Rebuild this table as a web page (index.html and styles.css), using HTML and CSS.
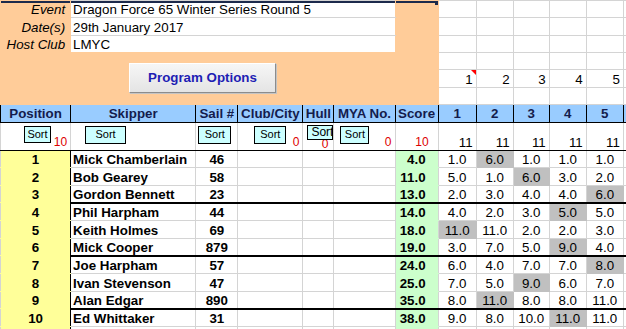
FILE: index.html
```html
<!DOCTYPE html>
<html>
<head>
<meta charset="utf-8">
<title>Dragon Force 65 Winter Series Round 5</title>
<link rel="stylesheet" href="styles.css">
</head>
<body>
<table class="sheet">
  <colgroup>
    <col class="cA"><col class="cB"><col class="cC"><col class="cD"><col class="cE"><col class="cF"><col class="cG">
    <col class="cH"><col class="cI"><col class="cJ"><col class="cK"><col class="cL"><col class="cM">
  </colgroup>
  <tbody>
    <tr class="rt">
      <td class="pe lbl first">Event</td>
      <td class="info first" colspan="5">Dragon Force 65 Winter Series Round 5</td>
      <td class="pe first handle-cell"><span class="handle"></span></td>
      <td></td><td></td><td></td><td></td><td></td><td></td>
    </tr>
    <tr class="rt">
      <td class="pe lbl">Date(s)</td>
      <td class="info" colspan="5">29th January 2017</td>
      <td class="pe"></td>
      <td></td><td></td><td></td><td></td><td></td><td></td>
    </tr>
    <tr class="rt">
      <td class="pe lbl">Host Club</td>
      <td class="info last" colspan="5">LMYC</td>
      <td class="pe"></td>
      <td></td><td></td><td></td><td></td><td></td><td></td>
    </tr>
    <tr class="rt">
      <td class="pe btn-cell" colspan="7" rowspan="3"><div class="prog">Program Options</div></td>
      <td></td><td></td><td></td><td></td><td></td><td></td>
    </tr>
    <tr class="rt">
      <td class="num note-cell">1<span class="note"></span></td>
      <td class="num">2</td><td class="num">3</td><td class="num">4</td><td class="num">5</td><td></td>
    </tr>
    <tr class="rt">
      <td></td><td></td><td></td><td></td><td></td><td></td>
    </tr>
    <tr class="hdr">
      <th>Position</th><th>Skipper</th><th>Sail #</th><th>Club/City</th><th>Hull</th><th>MYA No.</th><th>Score</th>
      <th>1</th><th>2</th><th>3</th><th>4</th><th>5</th><th></th>
    </tr>
    <tr class="srt">
      <td><div class="sc"><span class="sort s-a">Sort</span><span class="cnt">10</span></div></td>
      <td><div class="sc"><span class="sort s-b">Sort</span></div></td>
      <td><div class="sc"><span class="sort s-c">Sort</span></div></td>
      <td><div class="sc"><span class="sort s-d">Sort</span><span class="cnt">0</span></div></td>
      <td><div class="sc"><span class="sort s-e">Sort</span><span class="cnt cnt-hull">0</span></div></td>
      <td><div class="sc"><span class="sort s-f">Sort</span><span class="cnt">0</span></div></td>
      <td><div class="sc"><span class="cnt cnt-score">10</span></div></td>
      <td><div class="sc"><span class="races">11</span></div></td>
      <td><div class="sc"><span class="races">11</span></div></td>
      <td><div class="sc"><span class="races">11</span></div></td>
      <td><div class="sc"><span class="races">11</span></div></td>
      <td><div class="sc"><span class="races">11</span></div></td>
      <td></td>
    </tr>
    <tr class="rd">
      <td class="pos">1</td><td class="skp">Mick Chamberlain</td><td class="sail">46</td><td></td><td></td><td></td><td class="scr">4.0</td>
      <td class="rc">1.0</td><td class="rc dis">6.0</td><td class="rc">1.0</td><td class="rc">1.0</td><td class="rc">1.0</td><td></td>
    </tr>
    <tr class="rd">
      <td class="pos">2</td><td class="skp">Bob Gearey</td><td class="sail">58</td><td></td><td></td><td></td><td class="scr">11.0</td>
      <td class="rc">5.0</td><td class="rc">1.0</td><td class="rc dis">6.0</td><td class="rc">3.0</td><td class="rc">2.0</td><td></td>
    </tr>
    <tr class="rd grp">
      <td class="pos">3</td><td class="skp">Gordon Bennett</td><td class="sail">23</td><td></td><td></td><td></td><td class="scr">13.0</td>
      <td class="rc">2.0</td><td class="rc">3.0</td><td class="rc">4.0</td><td class="rc">4.0</td><td class="rc dis">6.0</td><td></td>
    </tr>
    <tr class="rd">
      <td class="pos">4</td><td class="skp">Phil Harpham</td><td class="sail">44</td><td></td><td></td><td></td><td class="scr">14.0</td>
      <td class="rc">4.0</td><td class="rc">2.0</td><td class="rc">3.0</td><td class="rc dis">5.0</td><td class="rc">5.0</td><td></td>
    </tr>
    <tr class="rd">
      <td class="pos">5</td><td class="skp">Keith Holmes</td><td class="sail">69</td><td></td><td></td><td></td><td class="scr">18.0</td>
      <td class="rc dis">11.0</td><td class="rc">11.0</td><td class="rc">2.0</td><td class="rc">2.0</td><td class="rc">3.0</td><td></td>
    </tr>
    <tr class="rd grp">
      <td class="pos">6</td><td class="skp">Mick Cooper</td><td class="sail">879</td><td></td><td></td><td></td><td class="scr">19.0</td>
      <td class="rc">3.0</td><td class="rc">7.0</td><td class="rc">5.0</td><td class="rc dis">9.0</td><td class="rc">4.0</td><td></td>
    </tr>
    <tr class="rd">
      <td class="pos">7</td><td class="skp">Joe Harpham</td><td class="sail">57</td><td></td><td></td><td></td><td class="scr">24.0</td>
      <td class="rc">6.0</td><td class="rc">4.0</td><td class="rc">7.0</td><td class="rc">7.0</td><td class="rc dis">8.0</td><td></td>
    </tr>
    <tr class="rd">
      <td class="pos">8</td><td class="skp">Ivan Stevenson</td><td class="sail">47</td><td></td><td></td><td></td><td class="scr">25.0</td>
      <td class="rc">7.0</td><td class="rc">5.0</td><td class="rc dis">9.0</td><td class="rc">6.0</td><td class="rc">7.0</td><td></td>
    </tr>
    <tr class="rd grp">
      <td class="pos">9</td><td class="skp">Alan Edgar</td><td class="sail">890</td><td></td><td></td><td></td><td class="scr">35.0</td>
      <td class="rc">8.0</td><td class="rc dis">11.0</td><td class="rc">8.0</td><td class="rc">8.0</td><td class="rc">11.0</td><td></td>
    </tr>
    <tr class="rd">
      <td class="pos">10</td><td class="skp">Ed Whittaker</td><td class="sail">31</td><td></td><td></td><td></td><td class="scr">38.0</td>
      <td class="rc">9.0</td><td class="rc">8.0</td><td class="rc">10.0</td><td class="rc dis">11.0</td><td class="rc">11.0</td><td></td>
    </tr>
    <tr class="rd">
      <td class="pos"></td><td></td><td></td><td></td><td></td><td></td><td class="scr"></td>
      <td></td><td></td><td></td><td></td><td></td><td></td>
    </tr>
  </tbody>
</table>
</body>
</html>
```
FILE: styles.css
```css
html, body {
  margin: 0;
  padding: 0;
  background: #ffffff;
}
body {
  width: 626px;
  height: 329px;
  overflow: hidden;
  font-family: "Liberation Sans", Arial, sans-serif;
  font-size: 13.33px;
  color: #000;
}

.sheet {
  border-collapse: collapse;
  table-layout: fixed;
  width: 684px;
}
.cA { width: 70px; }
.cB { width: 125px; }
.cC { width: 42px; }
.cD { width: 65px; }
.cE { width: 31px; }
.cF { width: 61px; }
.cG { width: 43px; }
.cH { width: 38px; }
.cI { width: 37px; }
.cJ { width: 36px; }
.cK { width: 37px; }
.cL { width: 37px; }
.cM { width: 60px; }

.sheet td, .sheet th {
  padding: 0;
  border: 1px solid #d4d4d4;
  white-space: nowrap;
  overflow: hidden;
  line-height: 15px;
  vertical-align: bottom;
  font-weight: normal;
}

/* top panel */
.sheet .rt td { height: 16.33px; }
.sheet .pe {
  background: #ffcc99;
  border-color: #ffcc99;
}
.sheet .lbl {
  font-style: italic;
  text-align: right;
  padding-right: 5px;
}
.sheet .info {
  background: #ffffff;
  padding-left: 2px;
  border-left-color: #ffcc99;
  border-right-color: #ffcc99;
}
.sheet .info.last { border-bottom-color: #ffcc99; }
.sheet .first { box-shadow: inset 0 2px 0 #1c2a4c; }
.sheet .handle-cell { position: relative; }
.handle {
  position: absolute;
  right: -1px;
  top: 0;
  width: 4px;
  height: 4px;
  background: #1c2a4c;
}
.sheet .btn-cell { vertical-align: top; }
.prog {
  box-sizing: border-box;
  width: 147px;
  height: 30px;
  margin: 10px 0 0 128px;
  display: flex;
  align-items: center;
  justify-content: center;
  background: linear-gradient(#f6f6f6, #e4e4e4);
  border: 1px solid;
  border-color: #ffffff #8c8c8c #8c8c8c #ffffff;
  box-shadow: 1px 1px 0 #c4c4c4;
  color: #1e1eb4;
  font-weight: bold;
  font-size: 13.33px;
}
.sheet .num {
  text-align: right;
  padding-right: 3px;
}
.sheet .note-cell { position: relative; }
.note {
  position: absolute;
  top: 0;
  right: 0;
  width: 0;
  height: 0;
  border-top: 5px solid #ff0000;
  border-left: 5px solid transparent;
}

/* header */
.sheet .hdr th {
  height: 16px;
  background: #99ccff;
  border: 1px solid #000000;
  color: #141c4c;
  font-weight: bold;
  text-align: center;
  padding-bottom: 1px;
}

/* sort row */
.sheet .srt td {
  height: 27px;
  border-bottom: 1px solid #000000;
  vertical-align: top;
}
.sc {
  position: relative;
  height: 27px;
  display: flex;
  justify-content: flex-end;
  align-items: flex-end;
  padding-right: 3px;
}
.sort {
  box-sizing: border-box;
  position: absolute;
  top: 3px;
  height: 18px;
  background: #ccffff;
  border: 1px solid #000000;
  font-size: 11px;
  line-height: 15px;
  text-align: center;
  overflow: hidden;
  white-space: nowrap;
  z-index: 1;
}
.s-a { left: 23px; width: 27px; height: 17px; }
.s-b { left: 14px; width: 41px; }
.s-c { left: 2px; width: 33px; }
.s-d { left: 16px; width: 32px; }
.s-e {
  left: 4px;
  top: 2px;
  width: 26px;
  height: 15px;
  text-align: left;
  padding: 0 2px 0 3px;
  line-height: 12px;
  font-size: 12px;
  text-overflow: clip;
}
.s-f { left: 6px; width: 29px; }
.cnt {
  color: #dd0000;
  font-size: 12px;
  line-height: 12px;
  margin-bottom: 2px;
}
.cnt-hull { margin-right: 2px; margin-bottom: 0; }
.cnt-score { margin-right: 6px; }
.races {
  font-size: 13.33px;
  line-height: 13px;
  margin-bottom: 1px;
}

/* data rows */
.sheet .rd td { height: 16.33px; }
.sheet .rd .pos {
  background: #ffff99;
  border-top-color: #ffff99;
  border-bottom-color: #ffff99;
  border-right-color: #000000;
  font-weight: bold;
  text-align: center;
}
.sheet .rd .skp {
  font-weight: bold;
  padding-left: 2px;
}
.sheet .rd .sail {
  font-weight: bold;
  text-align: center;
}
.sheet .rd .scr {
  background: #ccffcc;
  border-top-color: #ccffcc;
  border-bottom-color: #ccffcc;
  font-weight: bold;
  text-align: right;
  padding-right: 12px;
}
.sheet .rd .rc { text-align: center; }
.sheet .rd .dis {
  background: #c0c0c0;
  border-color: #c0c0c0;
}
.sheet .rd.grp td:not(.pos) {
  border-bottom: 2px solid #000000;
}
```
